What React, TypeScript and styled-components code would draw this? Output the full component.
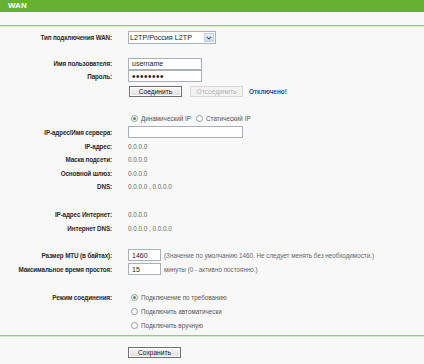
import React from "react";
import styled, { createGlobalStyle } from "styled-components";

const Global = createGlobalStyle`
  html, body { margin: 0; padding: 0; background: #f8f8f8; }
  body { font-family: "Liberation Sans", Arial, sans-serif; }
`;

const Page = styled.div`
  width: 424px;
  height: 364px;
  background: #f8f8f8;
  overflow: hidden;
  display: flex;
  flex-direction: column;
`;

const TitleBar = styled.div`
  height: 12px;
  background: #66b132;
  color: #fff;
  font-weight: bold;
  font-size: 8px;
  line-height: 12px;
  padding-left: 8px;
`;

const Divider = styled.div<{ $mt: number }>`
  margin-top: ${(p) => p.$mt}px;
  height: 1px;
  background: #9cc58c;
  border-bottom: 1px solid #d7e8d0;
`;

const Form = styled.div`
  display: flex;
  flex-direction: column;
`;

const Row = styled.div<{ $h: number }>`
  height: ${(p) => p.$h}px;
  display: grid;
  grid-template-columns: 112px 1fr;
  column-gap: 16px;
  align-items: center;
`;

const Spacer = styled.div<{ $h: number }>`
  height: ${(p) => p.$h}px;
`;

const Label = styled.div`
  text-align: right;
  font-size: 6.3px;
  font-weight: bold;
  letter-spacing: -0.12px;
  color: #2a2a2a;
  white-space: nowrap;
`;

const Cell = styled.div`
  display: flex;
  align-items: center;
  font-size: 6.3px;
  color: #555;
  white-space: nowrap;
`;

const Value = styled.span`
  font-size: 6.3px;
  color: #666;
`;

const SelectBox = styled.div`
  width: 88px;
  height: 13px;
  box-sizing: border-box;
  border: 1px solid #a9b3bf;
  background: #fff;
  display: flex;
`;

const SelectField = styled.select`
  appearance: none;
  flex: 1;
  border: none;
  background: transparent;
  font-family: "Liberation Sans", Arial, sans-serif;
  font-size: 7.2px;
  color: #222;
  padding: 0 0 0 1px;
  margin: 0;
  outline: none;
`;

const ArrowBox = styled.div`
  width: 10px;
  margin: 1px;
  background: linear-gradient(#e8eef8, #cfdbee);
  border: 1px solid #c3cfe2;
  box-sizing: border-box;
  display: flex;
  align-items: center;
  justify-content: center;
`;

const TextInput = styled.input<{ $w: number; $secret?: boolean }>`
  width: ${(p) => p.$w}px;
  height: 12px;
  box-sizing: border-box;
  border: 1px solid #a9b0b8;
  background: #fff;
  font-family: "Liberation Sans", Arial, sans-serif;
  font-size: ${(p) => (p.$secret ? "10px" : "7px")};
  letter-spacing: ${(p) => (p.$secret ? "0.5px" : "0")};
  color: #222;
  padding: 0 3px;
  margin: 0;
  outline: none;
`;

const Button = styled.button<{ $disabled?: boolean }>`
  width: 53px;
  height: 11px;
  box-sizing: border-box;
  padding: 0;
  margin: 0;
  font-family: "Liberation Sans", Arial, sans-serif;
  font-size: 6.6px;
  line-height: 9px;
  color: ${(p) => (p.$disabled ? "#b5b5b5" : "#222")};
  border: 1px solid ${(p) => (p.$disabled ? "#dadada" : "#707070")};
  background: ${(p) =>
    p.$disabled ? "#f2f2f2" : "linear-gradient(#f6f6f6, #dedede)"};
  box-shadow: ${(p) => (p.$disabled ? "none" : "inset 0 0 0 1px #fdfdfd")};
`;

const ButtonGroup = styled.div`
  display: flex;
  align-items: center;
  gap: 8px;
  padding-left: 1px;
`;

const Status = styled.span`
  font-size: 6.4px;
  font-weight: bold;
  color: #1d4f9a;
  margin-left: -2px;
`;

const RadioOption = styled.label`
  display: inline-flex;
  align-items: center;
  gap: 3px;
  font-size: 6.3px;
  color: #555;
  margin-right: 5px;
`;

const RadioDot = styled.span<{ $on?: boolean }>`
  width: 7px;
  height: 7px;
  box-sizing: border-box;
  border-radius: 50%;
  border: 1px solid #8e9aa8;
  background: #fff;
  display: inline-flex;
  align-items: center;
  justify-content: center;
  &::after {
    content: "";
    width: 3px;
    height: 3px;
    border-radius: 50%;
    background: ${(p) => (p.$on ? "#3f9b4a" : "transparent")};
  }
`;

const Hint = styled.span`
  font-size: 6.3px;
  color: #666;
  margin-left: 3px;
`;

const RadioCell = styled(Cell)`
  padding-left: 3px;
`;

const SaveRow = styled.div`
  height: 13px;
  margin-top: 9px;
  display: grid;
  grid-template-columns: 112px 1fr;
  column-gap: 16px;
  align-items: center;
`;

function Radio({ on, children }: { on?: boolean; children: React.ReactNode }) {
  return (
    <RadioOption>
      <RadioDot $on={on} />
      {children}
    </RadioOption>
  );
}

export default function App() {
  return (
    <Page>
      <Global />
      <TitleBar>WAN</TitleBar>
      <Divider $mt={13} />
      <Form>
        <Spacer $h={3} />
        <Row $h={15}>
          <Label>Тип подключения WAN:</Label>
          <Cell>
            <SelectBox>
              <SelectField defaultValue="l2tp">
                <option value="l2tp">L2TP/Россия L2TP</option>
              </SelectField>
              <ArrowBox>
                <svg width="6" height="4" viewBox="0 0 6 4">
                  <path d="M0.8 0.8 L3 3 L5.2 0.8" fill="none" stroke="#4d6185" strokeWidth="1.2" />
                </svg>
              </ArrowBox>
            </SelectBox>
          </Cell>
        </Row>
        <Spacer $h={12} />
        <Row $h={13}>
          <Label>Имя пользователя:</Label>
          <Cell>
            <TextInput $w={74} defaultValue="username" />
          </Cell>
        </Row>
        <Row $h={12}>
          <Label>Пароль:</Label>
          <Cell>
            <TextInput $w={74} $secret type="password" defaultValue="12345678" />
          </Cell>
        </Row>
        <Spacer $h={2} />
        <Row $h={14}>
          <div />
          <ButtonGroup>
            <Button>Соединить</Button>
            <Button $disabled disabled>
              Отсоединить
            </Button>
            <Status>Отключено!</Status>
          </ButtonGroup>
        </Row>
        <Spacer $h={13} />
        <Row $h={14}>
          <div />
          <RadioCell>
            <Radio on>Динамический IP</Radio>
            <Radio>Статический IP</Radio>
          </RadioCell>
        </Row>
        <Row $h={14}>
          <Label>IP-адрес/Имя сервера:</Label>
          <Cell>
            <TextInput $w={115} defaultValue="" />
          </Cell>
        </Row>
        <Row $h={14}>
          <Label>IP-адрес:</Label>
          <Cell>
            <Value>0.0.0.0</Value>
          </Cell>
        </Row>
        <Row $h={13.5}>
          <Label>Маска подсети:</Label>
          <Cell>
            <Value>0.0.0.0</Value>
          </Cell>
        </Row>
        <Row $h={13.5}>
          <Label>Основной шлюз:</Label>
          <Cell>
            <Value>0.0.0.0</Value>
          </Cell>
        </Row>
        <Row $h={13.5}>
          <Label>DNS:</Label>
          <Cell>
            <Value>0.0.0.0 , 0.0.0.0</Value>
          </Cell>
        </Row>
        <Spacer $h={13.5} />
        <Row $h={14}>
          <Label>IP-адрес Интернет:</Label>
          <Cell>
            <Value>0.0.0.0</Value>
          </Cell>
        </Row>
        <Row $h={14}>
          <Label>Интернет DNS:</Label>
          <Cell>
            <Value>0.0.0.0 , 0.0.0.0</Value>
          </Cell>
        </Row>
        <Spacer $h={13} />
        <Row $h={14}>
          <Label>Размер MTU (в байтах):</Label>
          <Cell>
            <TextInput $w={33} defaultValue="1460" />
            <Hint>(Значение по умолчанию 1460. Не следует менять без необходимости.)</Hint>
          </Cell>
        </Row>
        <Row $h={14}>
          <Label>Максимальное время простоя:</Label>
          <Cell>
            <TextInput $w={33} defaultValue="15" />
            <Hint>минуты (0 - активно постоянно.)</Hint>
          </Cell>
        </Row>
        <Spacer $h={14} />
        <Row $h={14}>
          <Label>Режим соединения:</Label>
          <RadioCell>
            <Radio on>Подключение по требованию</Radio>
          </RadioCell>
        </Row>
        <Row $h={14}>
          <div />
          <RadioCell>
            <Radio>Подключить автоматически</Radio>
          </RadioCell>
        </Row>
        <Row $h={14}>
          <div />
          <RadioCell>
            <Radio>Подключить вручную</Radio>
          </RadioCell>
        </Row>
      </Form>
      <Divider $mt={3} />
      <SaveRow>
        <div />
        <Cell>
          <Button>Сохранить</Button>
        </Cell>
      </SaveRow>
    </Page>
  );
}
